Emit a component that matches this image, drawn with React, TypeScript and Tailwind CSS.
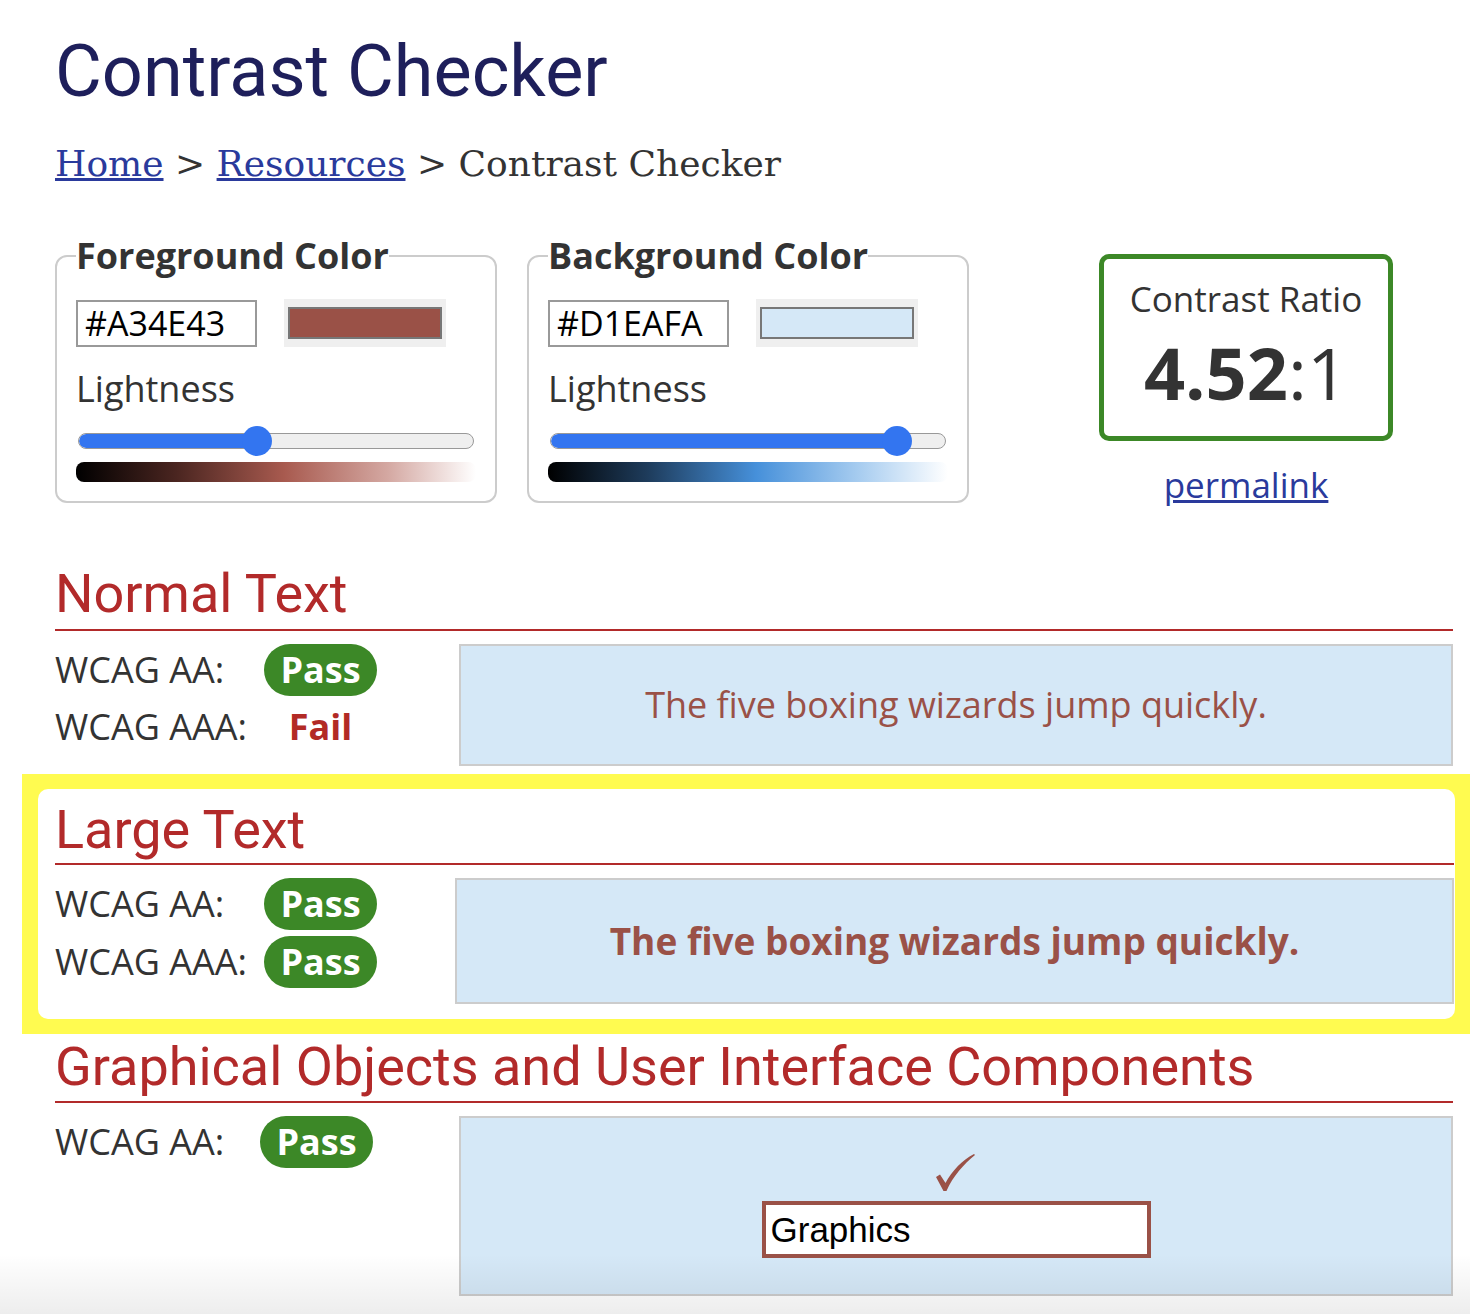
import React from "react";

const FG = "#9a5147";

function Badge() {
  return (
    <span className="flex h-[52px] w-[113px] items-center justify-center rounded-full bg-[#3c8827] text-[36px] font-bold leading-none text-white">
      Pass
    </span>
  );
}

function Row({ label, result, narrow = false }: { label: string; result: "pass" | "fail"; narrow?: boolean }) {
  return (
    <div className="flex h-[52px] items-center">
      <span className={narrow ? "w-[205px] text-[36px] leading-[52px]" : "w-[209px] text-[36px] leading-[52px]"}>{label}</span>
      {result === "pass" ? (
        <Badge />
      ) : (
        <span className="w-[113px] text-center text-[36px] font-bold leading-[52px] text-[#b22a25]">Fail</span>
      )}
    </div>
  );
}

function Picker({
  title,
  hex,
  swatch,
  pct,
  gradient,
}: {
  title: string;
  hex: string;
  swatch: string;
  pct: number;
  gradient: string;
}) {
  return (
    <fieldset className="w-[442px] rounded-[12px] border-2 border-[#cccccc] px-[19px] pb-[19px]">
      <legend className="text-[36px] font-bold leading-[51px] text-[#333]">{title}</legend>
      <div className="mt-[18px] flex items-center gap-[27px]">
        <div className="h-[47px] w-[181px] border-2 border-[#999] px-[7px] text-[34px] leading-[43px] text-black">{hex}</div>
        <div className="h-[48px] w-[162px] bg-[#efefef] px-[4px] py-[8px]">
          <div className="h-full w-full border-2 border-[#777]" style={{ backgroundColor: swatch }} />
        </div>
      </div>
      <div className="mt-[18px] text-[36px] leading-[48px] text-[#333]">Lightness</div>
      <div className="relative mx-[2px] mt-[13px] flex h-[30px] items-center">
        <div className="relative h-[16px] w-full overflow-hidden rounded-full border border-[#999] bg-[#efefef]">
          <div className="h-full rounded-full bg-[#3375f0]" style={{ width: `${pct}%` }} />
        </div>
        <div
          className="absolute top-0 h-[30px] w-[30px] -translate-x-1/2 rounded-full bg-[#3375f0]"
          style={{ left: `${pct}%` }}
        />
      </div>
      <div className="mt-[6px] h-[20px] rounded-[8px]" style={{ background: gradient }} />
    </fieldset>
  );
}

function Check() {
  return (
    <svg width="40" height="37" viewBox="0 0 40 37" aria-hidden="true">
      <path d="M0 23 L4 20.5 L9.5 29 C16 17 26 6 38 0 L39 1 C28 10 17 22 10.5 37 L7.5 37 Z" fill={FG} />
    </svg>
  );
}

export default function App() {
  return (
    <div className="relative min-h-screen overflow-hidden bg-white font-['Open_Sans',sans-serif] text-[#333]">
      <div className="pb-[17px] pl-[55px] pr-[17px] pt-[36px]">
        <h1 className="font-['Roboto',sans-serif] text-[72px] font-normal leading-none text-[#1e1f5b]">
          Contrast Checker
        </h1>
        <nav className="mt-[36px] font-['DejaVu_Serif',serif] text-[36px] leading-[40px] text-[#333]">
          <a href="#" className="text-[#2a3a9c] underline">Home</a>
          <span> &gt; </span>
          <a href="#" className="text-[#2a3a9c] underline">Resources</a>
          <span> &gt; Contrast Checker</span>
        </nav>

        <div className="mt-[46px] flex items-start">
          <Picker
            title="Foreground Color"
            hex="#A34E43"
            swatch={FG}
            pct={45.3}
            gradient="linear-gradient(to right, #000000 0%, #4a2520 25%, #a85a4f 52%, #d4a8a2 78%, #ffffff 100%)"
          />
          <div className="ml-[30px]">
            <Picker
              title="Background Color"
              hex="#D1EAFA"
              swatch="#d5e8f7"
              pct={87.6}
              gradient="linear-gradient(to right, #000000 0%, #1e3c5c 25%, #4690da 52%, #a8cdf0 78%, #ffffff 100%)"
            />
          </div>
          <div className="ml-[130px] mt-[24px] flex w-[294px] flex-col items-center">
            <div className="flex h-[187px] w-full flex-col items-center rounded-[10px] border-[5px] border-[#3c8827] pt-[16px]">
              <div className="text-[35px] leading-[48px] text-[#333]">Contrast Ratio</div>
              <div className="mt-[13px] text-[72px] leading-none text-[#333]">
                <span className="font-bold">4.52</span>
                <span>:1</span>
              </div>
            </div>
            <a href="#" className="mt-[20px] text-[35px] leading-[48px] text-[#2a3a9c] underline">
              permalink
            </a>
          </div>
        </div>

        {/* Normal Text */}
        <section className="mt-[58px]">
          <h2 className="border-b-2 border-[#b22a2a] pb-[8px] font-['Roboto',sans-serif] text-[54px] font-normal leading-none text-[#b22a2a]">
            Normal Text
          </h2>
          <div className="mt-[13px] flex">
            <div className="flex w-[404px] flex-col gap-[5px]">
              <Row label="WCAG AA:" result="pass" />
              <Row label="WCAG AAA:" result="fail" />
            </div>
            <div className="flex h-[122px] flex-1 items-center justify-center border-2 border-[#cccccc] bg-[#d5e8f7] text-[36px]" style={{ color: FG }}>
              The five boxing wizards jump quickly.
            </div>
          </div>
        </section>

        {/* Large Text */}
        <section className="-ml-[33px] -mr-[17px] mt-[8px] bg-[#fffb50] p-[15px] pl-[16px]">
          <div className="rounded-[10px] bg-white pb-[15px] pl-[17px] pr-[1px] pt-[14px]">
            <h2 className="border-b-2 border-[#b22a2a] pb-[6px] font-['Roboto',sans-serif] text-[54px] font-normal leading-none text-[#b22a2a]">
              Large Text
            </h2>
            <div className="mt-[13px] flex">
              <div className="flex w-[400px] flex-col gap-[6px]">
                <Row label="WCAG AA:" result="pass" />
                <Row label="WCAG AAA:" result="pass" />
              </div>
              <div className="flex h-[126px] flex-1 items-center justify-center border-2 border-[#cccccc] bg-[#d5e8f7] text-[37px] font-bold" style={{ color: FG }}>
                The five boxing wizards jump quickly.
              </div>
            </div>
          </div>
        </section>

        {/* Graphical Objects */}
        <section className="mt-[6px]">
          <h2 className="border-b-2 border-[#b22a2a] pb-[7px] font-['Roboto',sans-serif] text-[54px] font-normal leading-none text-[#b22a2a]">
            Graphical Objects and User Interface Components
          </h2>
          <div className="mt-[13px] flex">
            <div className="flex w-[404px] flex-col">
              <Row label="WCAG AA:" result="pass" narrow />
            </div>
            <div className="flex h-[180px] flex-1 flex-col items-center justify-center border-2 border-[#cccccc] bg-[#d5e8f7]">
              <Check />
              <div className="mt-[10px] h-[57px] w-[389px] border-4 bg-white px-[5px] font-['Liberation_Sans',sans-serif] text-[35px] leading-[49px] text-black" style={{ borderColor: FG }}>
                Graphics
              </div>
            </div>
          </div>
        </section>
      </div>
      <div className="pointer-events-none absolute bottom-0 left-0 right-0 h-[60px] bg-gradient-to-b from-transparent to-[rgba(0,0,0,0.07)]" />
    </div>
  );
}
